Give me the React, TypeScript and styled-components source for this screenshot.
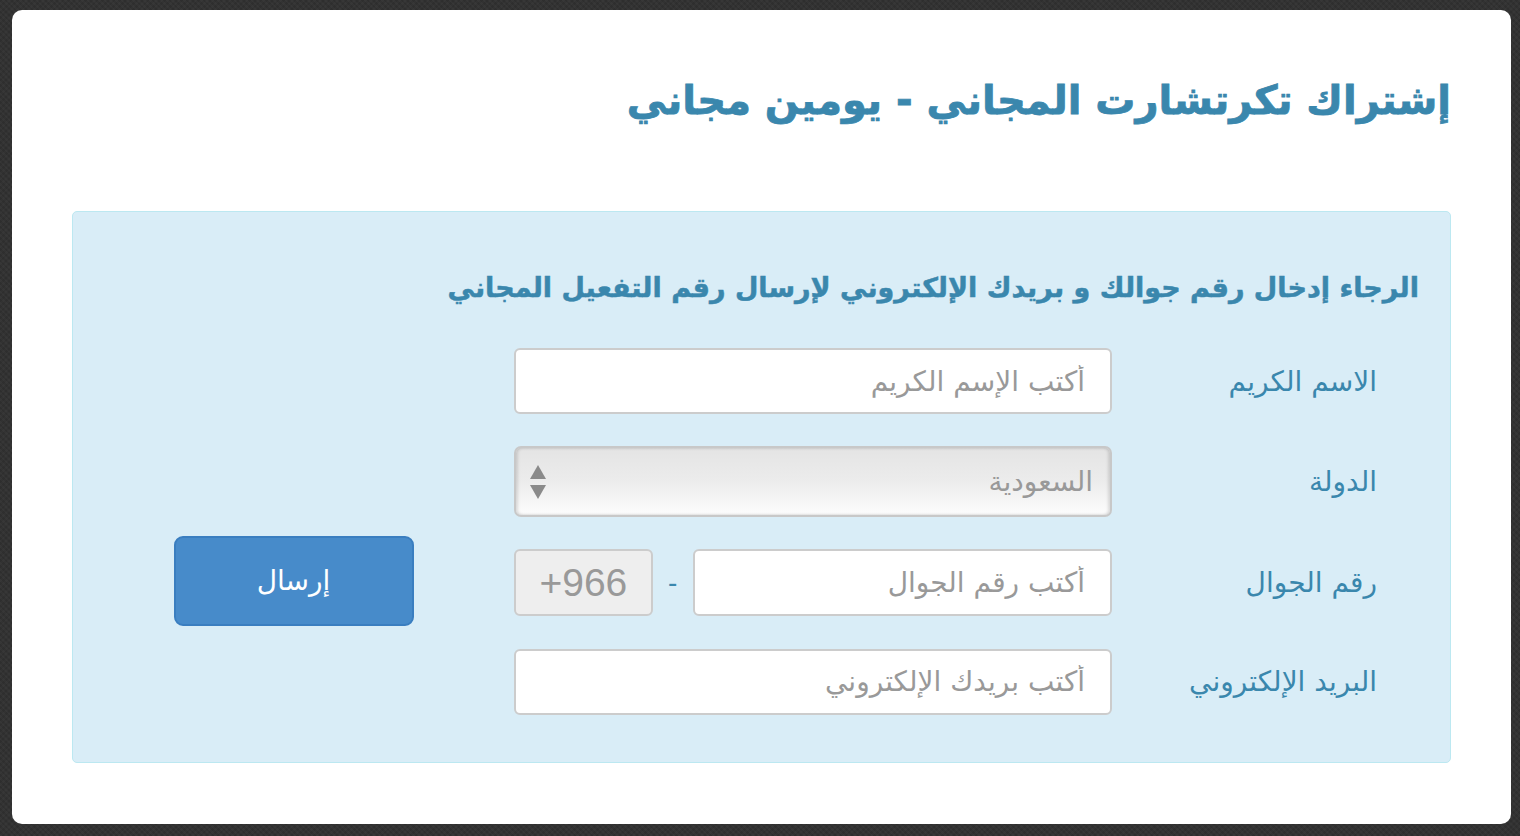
import React, {FC} from 'react';
import styled, {createGlobalStyle} from 'styled-components';

const GlobalStyle = createGlobalStyle`
  html, body {
    margin: 0;
    padding: 0;
    height: 100%;
  }

  body {
    background-color: #323232;
    background-image: repeating-linear-gradient(45deg, rgba(255, 255, 255, 0.025) 0 2px, transparent 2px 4px),
    repeating-linear-gradient(-45deg, rgba(0, 0, 0, 0.08) 0 2px, transparent 2px 4px);
    font-family: "DejaVu Sans", "Noto Sans", sans-serif;
  }
`

const ARABIC = `"DejaVu Sans", "Noto Sans", sans-serif`

const Page = styled.div`
  box-sizing: border-box;
  height: 836px;
  padding: 10px 9px 12px 12px;
`

const Card = styled.main`
  box-sizing: border-box;
  height: 100%;
  background: #fff;
  border-radius: 10px;
  padding: 54px 60px 0 60px;
  direction: rtl;
`

const Title = styled.h1`
  margin: 0;
  font-family: ${ARABIC};
  font-size: 40px;
  font-weight: 700;
  line-height: 72px;
  color: #3a87ad;
  -webkit-text-stroke: 0.8px #3a87ad;
`

const InfoBox = styled.section`
  margin-top: 75px;
  background: #d9edf7;
  border: 1px solid #bce8f1;
  border-radius: 5px;
  padding: 54px 31px 47px 0;
`

const Lead = styled.h2`
  margin: 0 0 38px 0;
  font-family: ${ARABIC};
  font-size: 27px;
  font-weight: 700;
  line-height: 44px;
  color: #3a87ad;
  -webkit-text-stroke: 0.5px #3a87ad;
`

const FormGrid = styled.form`
  display: grid;
  grid-template-columns: 307px 598px 1fr;
  grid-template-rows: 66px 71px 67px 67px;
  row-gap: 32px;
  align-items: center;
`

const Label = styled.label<{ $row: number }>`
  grid-column: 1;
  grid-row: ${({$row}) => $row};
  padding-right: 42px;
  font-family: ${ARABIC};
  font-size: 28px;
  color: #3a87ad;
`

const Control = styled.div<{ $row: number }>`
  grid-column: 2;
  grid-row: ${({$row}) => $row};
`

const TextInput = styled.input`
  box-sizing: border-box;
  width: 100%;
  height: 66px;
  padding: 0 25px;
  border: 2px solid #ccc;
  border-radius: 6px;
  background: #fff;
  font-family: ${ARABIC};
  font-size: 28px;
  color: #555;
  direction: rtl;

  &::placeholder {
    color: #999;
  }
`

const SelectBox = styled.div`
  box-sizing: border-box;
  height: 71px;
  display: flex;
  align-items: center;
  justify-content: space-between;
  padding: 0 17px 0 12px;
  border: 2px solid #c8c8c8;
  border-radius: 7px;
  background: linear-gradient(to bottom, #e4e4e4 0%, #ececec 50%, #fdfdfd 100%);
  box-shadow: inset 2px 0 3px rgba(0, 0, 0, 0.12), inset -2px 0 3px rgba(0, 0, 0, 0.12);
  font-family: ${ARABIC};
  font-size: 28px;
  color: #999;
`

const PhoneRow = styled.div`
  display: flex;
  align-items: center;
  height: 67px;
`

const PhoneInput = styled(TextInput)`
  width: 420px;
  height: 67px;
`

const Dash = styled.span`
  width: 40px;
  text-align: center;
  font-family: "Liberation Sans", sans-serif;
  font-size: 28px;
  color: #3a87ad;
`

const Prefix = styled.span`
  box-sizing: border-box;
  width: 139px;
  height: 67px;
  display: flex;
  align-items: center;
  justify-content: center;
  border: 2px solid #ccc;
  border-radius: 6px;
  background: #eee;
  font-family: "Liberation Sans", "Noto Sans", sans-serif;
  font-size: 39px;
  color: #999;
  direction: ltr;
`

const SubmitCell = styled.div`
  grid-column: 3;
  grid-row: 2 / 5;
  display: flex;
  justify-content: center;
`

const SubmitButton = styled.button`
  box-sizing: border-box;
  width: 240px;
  height: 90px;
  border: 2px solid #3a7ec0;
  border-radius: 9px;
  background: #478bca;
  font-family: ${ARABIC};
  font-size: 28px;
  color: #fff;
  cursor: pointer;
`

const Arrows: FC = () => (
    <svg width="20" height="38" viewBox="0 0 20 38">
        <path d="M10 2 L18 16 L2 16 Z" fill="#8a8a8a"/>
        <path d="M10 36 L18 22 L2 22 Z" fill="#8a8a8a"/>
    </svg>
)

type TFieldProps = {
    label: string
    row: number
    children: React.ReactNode
}

const Field: FC<TFieldProps> = ({label, row, children}) => (
    <>
        <Label $row={row}>{label}</Label>
        <Control $row={row}>{children}</Control>
    </>
)

const App: FC = () => {
    return (
        <>
            <GlobalStyle/>
            <Page>
                <Card>
                    <Title>إشتراك تكرتشارت المجاني - يومين مجاني</Title>
                    <InfoBox>
                        <Lead>الرجاء إدخال رقم جوالك و بريدك الإلكتروني لإرسال رقم التفعيل المجاني</Lead>
                        <FormGrid onSubmit={e => e.preventDefault()}>
                            <Field label="الاسم الكريم" row={1}>
                                <TextInput placeholder="أكتب الإسم الكريم"/>
                            </Field>
                            <Field label="الدولة" row={2}>
                                <SelectBox>
                                    <span>السعودية</span>
                                    <Arrows/>
                                </SelectBox>
                            </Field>
                            <Field label="رقم الجوال" row={3}>
                                <PhoneRow>
                                    <PhoneInput placeholder="أكتب رقم الجوال"/>
                                    <Dash>-</Dash>
                                    <Prefix>+966</Prefix>
                                </PhoneRow>
                            </Field>
                            <Field label="البريد الإلكتروني" row={4}>
                                <TextInput placeholder="أكتب بريدك الإلكتروني"/>
                            </Field>
                            <SubmitCell>
                                <SubmitButton type="submit">إرسال</SubmitButton>
                            </SubmitCell>
                        </FormGrid>
                    </InfoBox>
                </Card>
            </Page>
        </>
    );
};

export default App;
